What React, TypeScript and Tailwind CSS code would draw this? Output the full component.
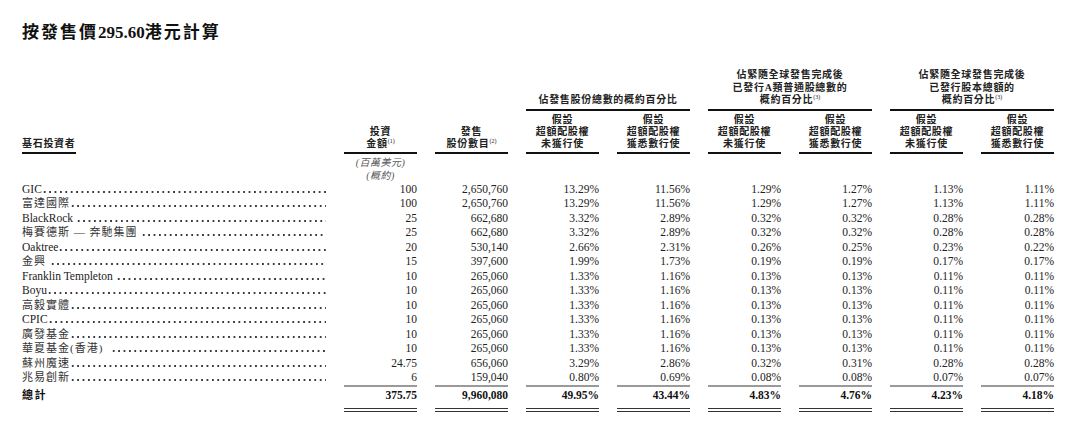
import React from "react";

type Row = { name: string; v: string[]; cjk?: boolean };

const NB = "\u00a0";

const rows: Row[] = [
  { name: "GIC", v: ["100", "2,650,760", "13.29%", "11.56%", "1.29%", "1.27%", "1.13%", "1.11%"] },
  { name: "富達國際", cjk: true, v: ["100", "2,650,760", "13.29%", "11.56%", "1.29%", "1.27%", "1.13%", "1.11%"] },
  { name: "BlackRock" + NB, v: ["25", "662,680", "3.32%", "2.89%", "0.32%", "0.32%", "0.28%", "0.28%"] },
  { name: "梅賽德斯 — 奔馳集團" + NB, cjk: true, v: ["25", "662,680", "3.32%", "2.89%", "0.32%", "0.32%", "0.28%", "0.28%"] },
  { name: "Oaktree", v: ["20", "530,140", "2.66%", "2.31%", "0.26%", "0.25%", "0.23%", "0.22%"] },
  { name: "金興" + NB, cjk: true, v: ["15", "397,600", "1.99%", "1.73%", "0.19%", "0.19%", "0.17%", "0.17%"] },
  { name: "Franklin Templeton" + NB, v: ["10", "265,060", "1.33%", "1.16%", "0.13%", "0.13%", "0.11%", "0.11%"] },
  { name: "Boyu", v: ["10", "265,060", "1.33%", "1.16%", "0.13%", "0.13%", "0.11%", "0.11%"] },
  { name: "高毅實體", cjk: true, v: ["10", "265,060", "1.33%", "1.16%", "0.13%", "0.13%", "0.11%", "0.11%"] },
  { name: "CPIC", v: ["10", "265,060", "1.33%", "1.16%", "0.13%", "0.13%", "0.11%", "0.11%"] },
  { name: "廣發基金", cjk: true, v: ["10", "265,060", "1.33%", "1.16%", "0.13%", "0.13%", "0.11%", "0.11%"] },
  { name: "華夏基金(香港)" + NB + NB, cjk: true, v: ["10", "265,060", "1.33%", "1.16%", "0.13%", "0.13%", "0.11%", "0.11%"] },
  { name: "蘇州魔速", cjk: true, v: ["24.75", "656,060", "3.29%", "2.86%", "0.32%", "0.31%", "0.28%", "0.28%"] },
  { name: "兆易創新", cjk: true, v: ["6", "159,040", "0.80%", "0.69%", "0.08%", "0.08%", "0.07%", "0.07%"] },
];

const total = ["375.75", "9,960,080", "49.95%", "43.44%", "4.83%", "4.76%", "4.23%", "4.18%"];

const grid = "grid grid-cols-[304px_repeat(8,73px)] gap-x-[18px]";

function Sup({ n }: { n: string }) {
  return <span className="align-super text-[6px] leading-none font-normal tracking-normal">({n})</span>;
}

function SubHead({ last }: { last: string }) {
  return (
    <div className="flex flex-col items-center border-b-2 border-[#111] pt-[3px] pb-[2px] leading-[12px]">
      <span>假設</span>
      <span>超額配股權</span>
      <span>{last}</span>
    </div>
  );
}

function Name({ name, cjk, bold }: { name: string; cjk?: boolean; bold?: boolean }) {
  return (
    <div className="flex min-w-0 items-center overflow-hidden whitespace-nowrap">
      <span
        className={
          cjk
            ? bold
              ? "shrink-0 text-[11px] tracking-[1.5px] font-bold text-[#111]"
              : "shrink-0 text-[11px] tracking-[1px] text-[#333]"
            : "shrink-0"
        }
      >
        {name}
      </span>
      <span className="mt-[5px] h-[2px] min-w-0 flex-1 bg-[radial-gradient(circle,#3a3a3a_0.75px,transparent_1.1px)] bg-[length:5.4px_2px] bg-repeat-x" />
    </div>
  );
}

export default function App() {
  return (
    <div className="h-[434px] w-[1080px] overflow-hidden bg-white font-['Liberation_Serif','Noto_Sans_CJK_TC',serif] text-[#1a1a1a]">
      <div className="pl-[22px] pt-[24px] text-[17px] font-bold leading-[18px] text-[#111]">
        <span className="tracking-[2px]">按發售價</span>
        <span>295.60</span>
        <span className="tracking-[2px]">港元計算</span>
      </div>

      <div className="pl-[22px] pt-[27px]">
        {/* header */}
        <div className={`${grid} text-[10px] font-bold tracking-[0.7px] text-[#222]`}>
          <div className="col-start-1 row-span-2 row-start-1 self-end">
            <span className="inline-block border-b-2 border-[#111] pb-[2px] leading-[12px]">基石投資者</span>
          </div>
          <div className="col-start-2 row-span-2 row-start-1 flex flex-col items-center self-end border-b-2 border-[#111] pb-[2px] leading-[12px]">
            <span>投資</span>
            <span>
              金額
              <Sup n="1" />
            </span>
          </div>
          <div className="col-start-3 row-span-2 row-start-1 flex flex-col items-center self-end border-b-2 border-[#111] pb-[2px] leading-[12px]">
            <span>發售</span>
            <span>
              股份數目
              <Sup n="2" />
            </span>
          </div>
          <div className="col-span-2 col-start-4 row-start-1 flex flex-col items-center justify-end border-b-2 border-[#111] pb-[2px] leading-[12.5px]">
            <span>佔發售股份總數的概約百分比</span>
          </div>
          <div className="col-span-2 col-start-6 row-start-1 flex flex-col items-center justify-end border-b-2 border-[#111] pb-[2px] leading-[12.5px]">
            <span>佔緊隨全球發售完成後</span>
            <span>已發行A類普通股總數的</span>
            <span>
              概約百分比
              <Sup n="3" />
            </span>
          </div>
          <div className="col-span-2 col-start-8 row-start-1 flex flex-col items-center justify-end border-b-2 border-[#111] pb-[2px] leading-[12.5px]">
            <span>佔緊隨全球發售完成後</span>
            <span>已發行股本總額的</span>
            <span>
              概約百分比
              <Sup n="3" />
            </span>
          </div>
          <div className="col-start-4 row-start-2">
            <SubHead last="未獲行使" />
          </div>
          <div className="col-start-5 row-start-2">
            <SubHead last="獲悉數行使" />
          </div>
          <div className="col-start-6 row-start-2">
            <SubHead last="未獲行使" />
          </div>
          <div className="col-start-7 row-start-2">
            <SubHead last="獲悉數行使" />
          </div>
          <div className="col-start-8 row-start-2">
            <SubHead last="未獲行使" />
          </div>
          <div className="col-start-9 row-start-2">
            <SubHead last="獲悉數行使" />
          </div>
        </div>

        {/* units */}
        <div className={`${grid} pt-[2px] text-[10px] italic leading-[13px] text-[#555]`}>
          <div className="col-start-2 flex flex-col items-center">
            <span className="tracking-[0.5px]">(百萬美元)</span>
            <span className="tracking-[0.5px]">(概約)</span>
          </div>
        </div>

        {/* body */}
        <div className="text-[11.5px] text-[#222]">
          {rows.map((r, i) => (
            <div key={i} className={`${grid} h-[14.5px] items-center leading-[14.5px]`}>
              <Name name={r.name} cjk={r.cjk} />
              {r.v.map((v, j) => (
                <div key={j} className="text-right">
                  {v}
                </div>
              ))}
            </div>
          ))}

          <div className={`${grid} items-stretch`}>
            <div className="flex items-center pt-[2px] leading-[16px]">
              <Name name={"總計" + NB} cjk bold />
            </div>
            {total.map((v, j) => (
              <div key={j} className="border-t-2 border-[#9a9a9a] text-right font-bold leading-[16px] text-[#111]">
                {v}
              </div>
            ))}
          </div>
          <div className={`${grid} mt-[5px]`}>
            <div />
            {total.map((_, j) => (
              <div key={j} className="h-[4px] border-y border-[#333]" />
            ))}
          </div>
        </div>
      </div>
    </div>
  );
}
